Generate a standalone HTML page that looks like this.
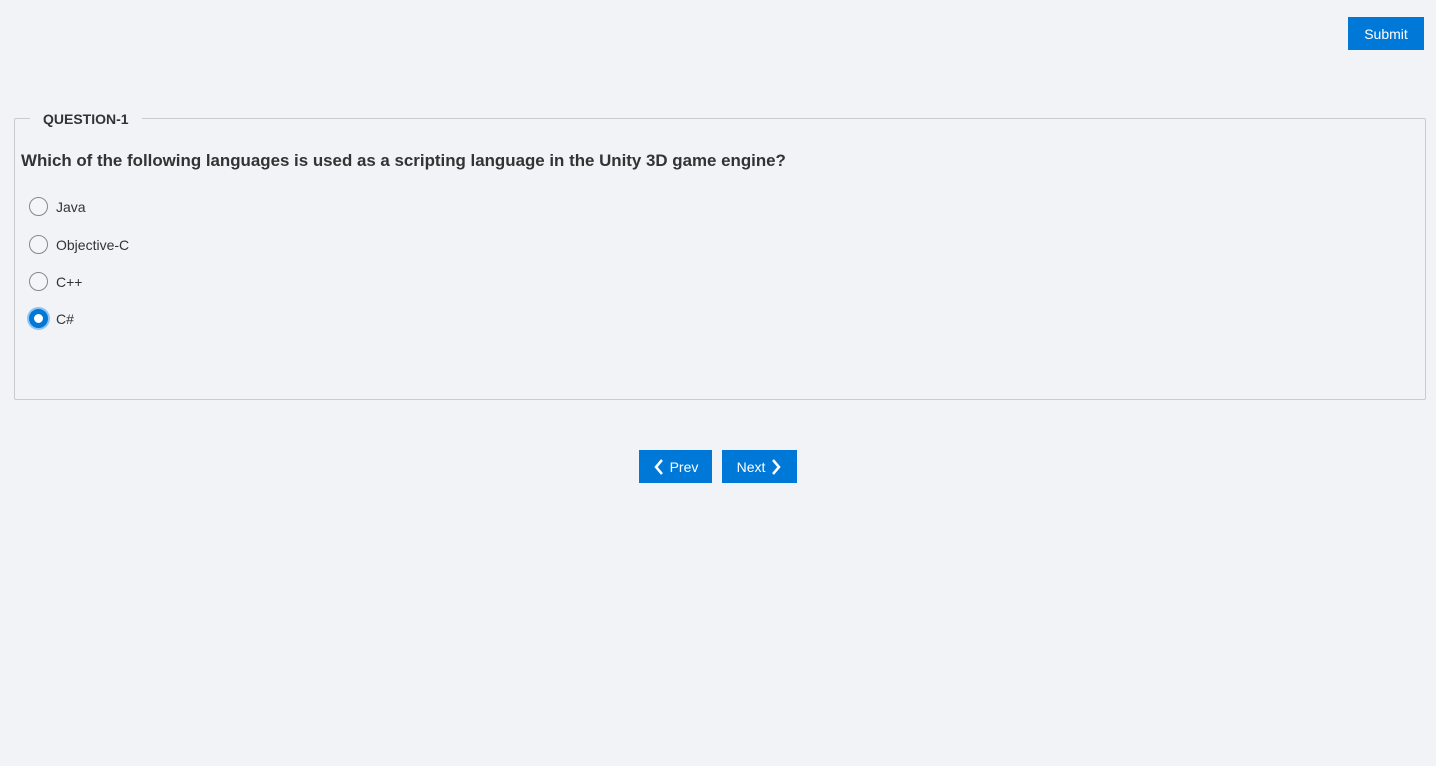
<!DOCTYPE html>
<html><head><style>
body{margin:0;background:#f1f3f7;font-family:"Liberation Sans",sans-serif;color:#333;width:1436px;height:766px;position:relative;overflow:hidden}
.btn{position:absolute;background:#0078d7;color:#fff;font-size:14px;display:flex;align-items:center;justify-content:center}
.box{position:absolute;left:14px;top:118px;width:1410px;height:280px;border:1px solid #c9cbd0;border-radius:2px}
.leg{position:absolute;left:30px;top:111px;background:#f1f3f7;padding:0 13px;font-size:14px;font-weight:bold;color:#333}
.q{position:absolute;left:21px;top:151px;font-size:16.9px;font-weight:bold;color:#333}
.opt{position:absolute;left:29px;font-size:14px;display:flex;align-items:center}
.r{width:19px;height:19px;border:1px solid #888;border-radius:50%;box-sizing:border-box;margin-right:8px;background:#f4f5f8}
.sel{background:#fff;border:5px solid #0078d7;box-shadow:0 0 0 2px #8fc3f0}
</style></head><body>
<div class="btn" style="left:1348px;top:17px;width:76px;height:33px">Submit</div>
<div class="box"></div>
<div class="leg">QUESTION-1</div>
<div class="q">Which of the following languages is used as a scripting language in the Unity 3D game engine?</div>
<div class="opt" style="top:197px"><div class="r"></div>Java</div>
<div class="opt" style="top:235px"><div class="r"></div>Objective-C</div>
<div class="opt" style="top:272px"><div class="r"></div>C++</div>
<div class="opt" style="top:309px"><div class="r sel"></div>C#</div>
<div class="btn" style="left:639px;top:450px;width:73px;height:33px"><svg width="12" height="16" viewBox="0 0 12 16" style="margin-right:5px"><path d="M9 1L3 8l6 7" stroke="#fff" stroke-width="2.5" fill="none"/></svg>Prev</div>
<div class="btn" style="left:722px;top:450px;width:75px;height:33px">Next<svg width="12" height="16" viewBox="0 0 12 16" style="margin-left:5px"><path d="M3 1l6 7-6 7" stroke="#fff" stroke-width="2.5" fill="none"/></svg></div>
</body></html>
